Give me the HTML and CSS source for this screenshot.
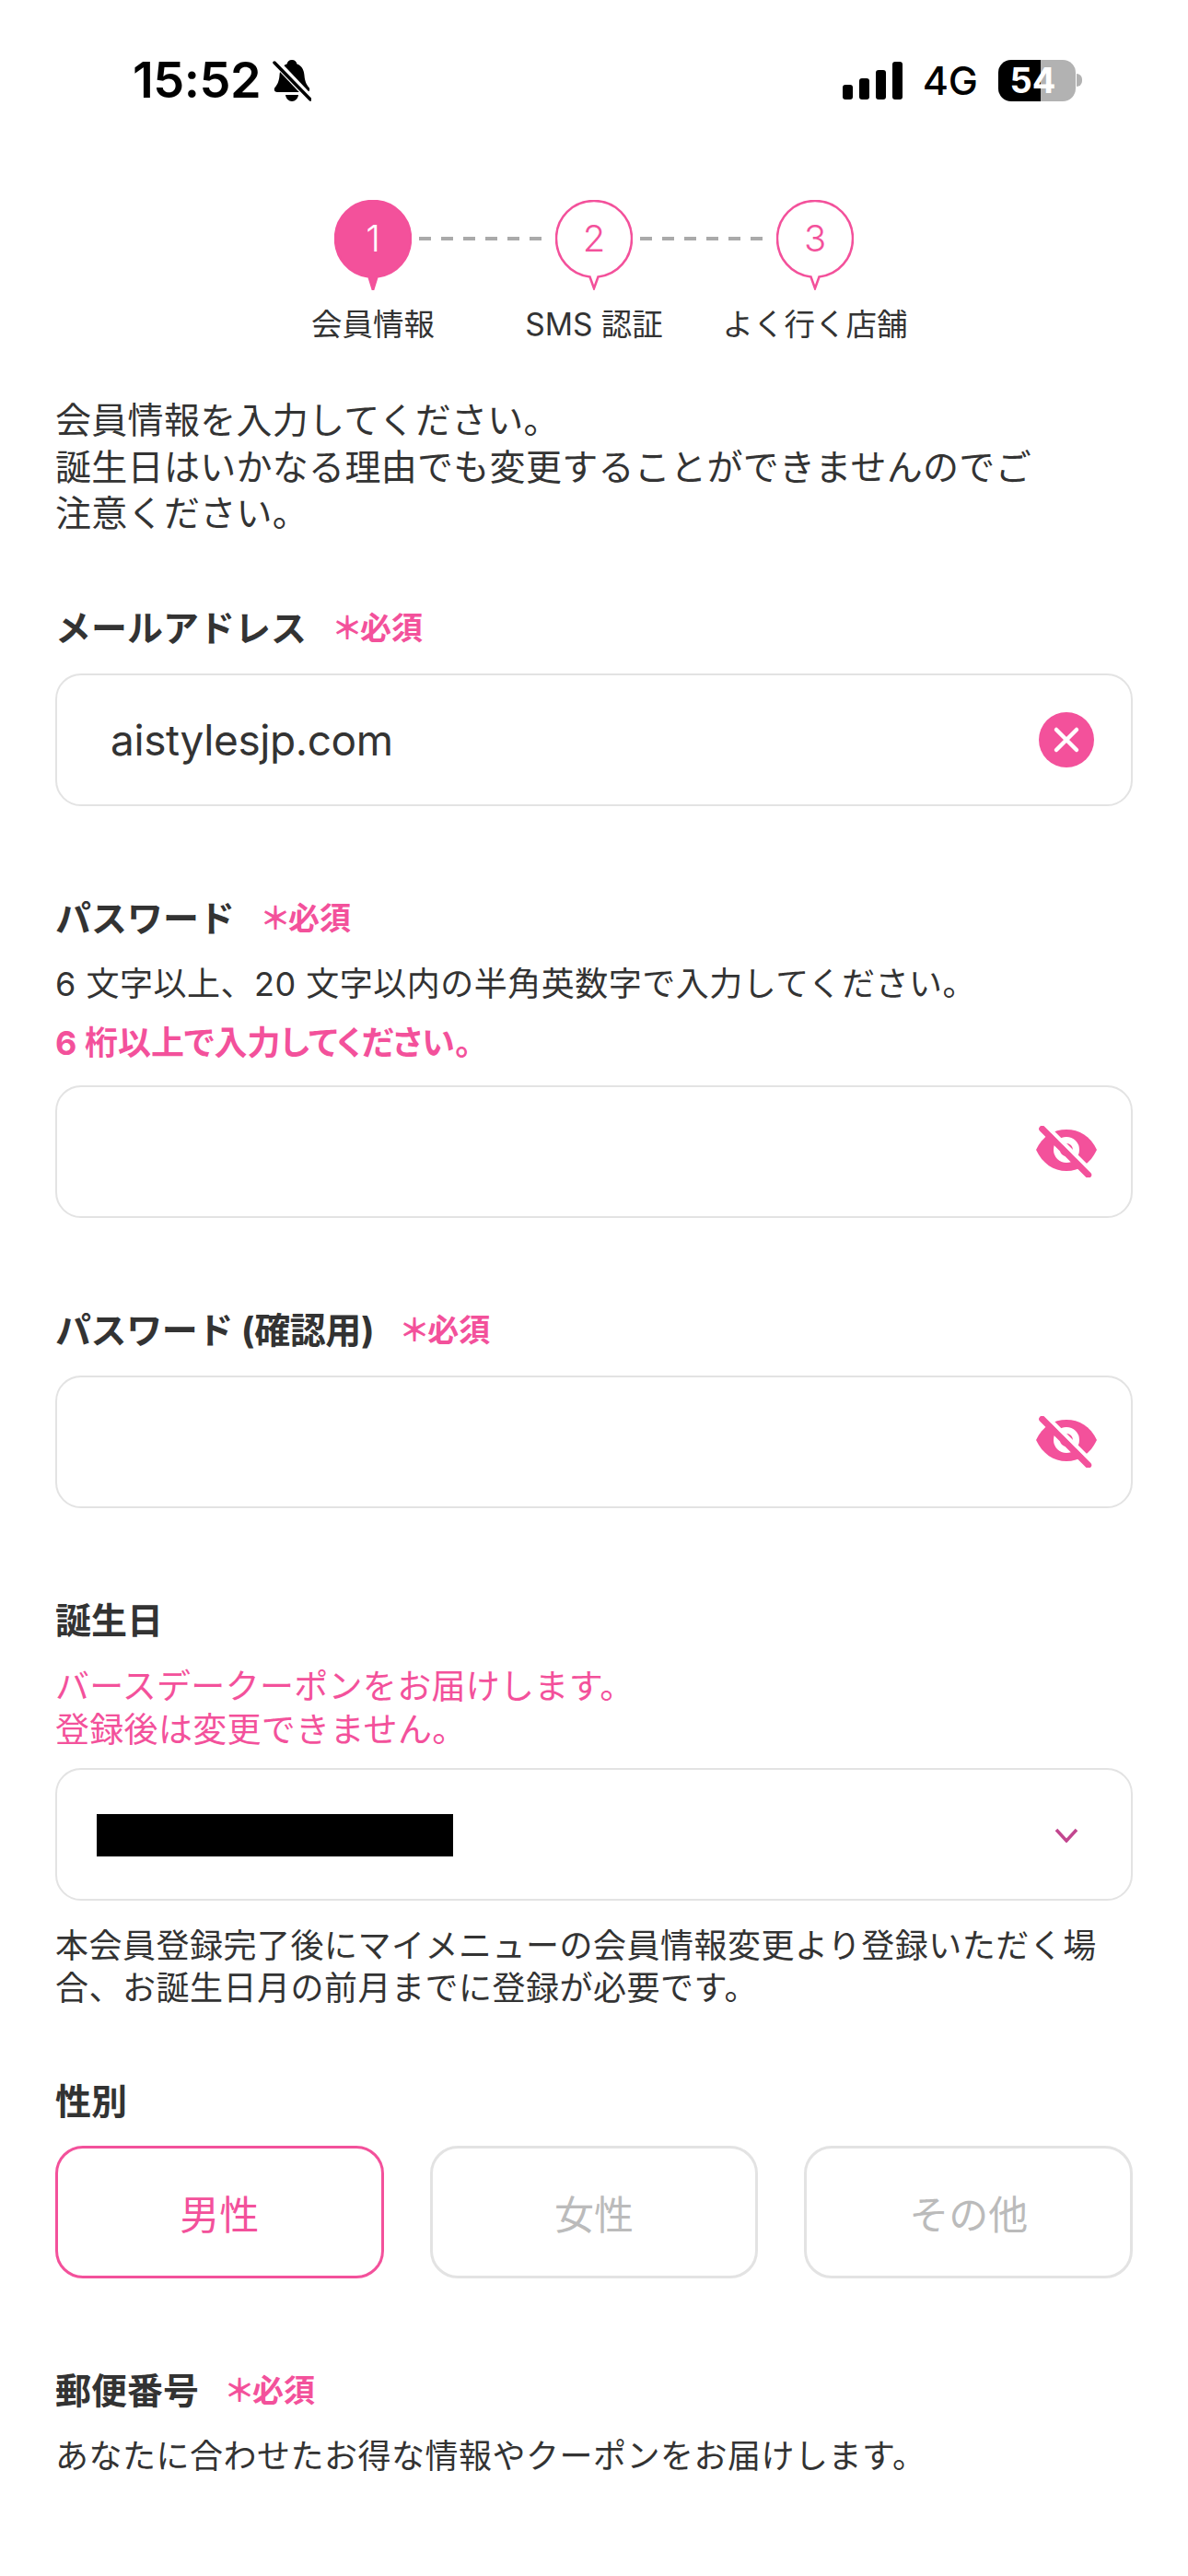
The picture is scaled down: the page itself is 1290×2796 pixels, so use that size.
FILE: index.html
```html
<!DOCTYPE html>
<html lang="ja">
<head>
  <meta charset="UTF-8" />
  <meta name="viewport" content="width=device-width, initial-scale=1.0"/>
  <title>会員情報</title>
  <link rel="stylesheet" href="styles.css">
</head>
<body>

  <!-- Status bar -->
  <div class="status-bar">
    <div class="status-left">
      <span class="clock">15:52</span>
      <svg class="bell" viewBox="0 0 42 45" width="42" height="45">
        <path d="M21 0c3 0 5 2 5.500 4.500C32 6.500 34 11 34.500 17c.5 6 2 9.500 5 13 1.500 2 .5 5-2.500 5H5c-3 0-4-3-2.500-5 3-3.500 4.500-7 5-13 .5-6 2.500-10.500 8-12.500C16 2 18 0 21 0z"/>
        <path d="M14 38h14c-.5 4-3.500 7-7 7s-6.500-3-7-7z"/>
        <path d="M3 2 L40 41" stroke="#fff" stroke-width="8"/>
        <path d="M2 3 L41 43" stroke="#000" stroke-width="3.500" stroke-linecap="round"/>
      </svg>
    </div>
    <div class="status-right">
      <div class="signal">
        <span class="bar bar1"></span>
        <span class="bar bar2"></span>
        <span class="bar bar3"></span>
        <span class="bar bar4"></span>
      </div>
      <span class="network">4G</span>
      <div class="battery">
        <span class="battery-level">54</span>
        <span class="battery-tip"></span>
      </div>
    </div>
  </div>

  <!-- Steps -->
  <div class="stepper">
    <div class="step step-active">
      <div class="pin-row">
        <div class="pin">
          <svg viewBox="0 0 84 98" width="84" height="98">
            <path class="pin-shape" d="M42 98 L37.500 83.500 C16 81 1 63 1 42 C1 19 19 1 42 1 C65 1 83 19 83 42 C83 63 68 81 46.500 83.500 Z"/>
          </svg>
          <span class="pin-num">1</span>
        </div>
        <span class="dashes"></span>
      </div>
      <span class="step-label">会員情報</span>
    </div>
    <div class="step">
      <div class="pin-row">
        <div class="pin">
          <svg viewBox="0 0 84 98" width="84" height="98">
            <path class="pin-shape" d="M42 96 L37.500 83.500 C16 81 1 63 1 42 C1 19 19 1 42 1 C65 1 83 19 83 42 C83 63 68 81 46.500 83.500 Z"/>
          </svg>
          <span class="pin-num">2</span>
        </div>
        <span class="dashes"></span>
      </div>
      <span class="step-label">SMS 認証</span>
    </div>
    <div class="step">
      <div class="pin-row">
        <div class="pin">
          <svg viewBox="0 0 84 98" width="84" height="98">
            <path class="pin-shape" d="M42 96 L37.500 83.500 C16 81 1 63 1 42 C1 19 19 1 42 1 C65 1 83 19 83 42 C83 63 68 81 46.500 83.500 Z"/>
          </svg>
          <span class="pin-num">3</span>
        </div>
      </div>
      <span class="step-label">よく行く店舗</span>
    </div>
  </div>

  <div class="form">
    <p class="intro">会員情報を入力してください。<br>誕生日はいかなる理由でも変更することができませんのでご<br>注意ください。</p>

    <div class="field field-email">
      <div class="label-row">
        <span class="label">メールアドレス</span>
        <span class="required">＊必須</span>
      </div>
      <div class="input">
        <span class="input-value">aistylesjp.com</span>
        <svg class="icon-clear" viewBox="0 0 60 60" width="60" height="60">
          <circle cx="30" cy="30" r="30" fill="#f3519b"/>
          <path d="M19 19 L41 41 M41 19 L19 41" stroke="#fff" stroke-width="4.500" stroke-linecap="round"/>
        </svg>
      </div>
    </div>

    <div class="field">
      <div class="label-row">
        <span class="label">パスワード</span>
        <span class="required">＊必須</span>
      </div>
      <p class="hint">6 文字以上、20 文字以内の半角英数字で入力してください。</p>
      <p class="error">6 桁以上で入力してください。</p>
      <div class="input input-after-error">
        <svg class="icon-eye" viewBox="0 0 66 56" width="66" height="56">
          <path fill="#f3519b" d="M0 26C7 11 19 4 33 4s26 7 33 22c-7 15-19 23-33 23S7 41 0 26z"/>
          <circle cx="33" cy="26" r="10.500" fill="none" stroke="#fff" stroke-width="7"/>
          <path d="M10.500 -.500 L60.500 49.500" stroke="#fff" stroke-width="4.500"/>
          <path d="M6.700 3.300 L56.700 53.300" stroke="#f3519b" stroke-width="7" stroke-linecap="round"/>
        </svg>
      </div>
    </div>

    <div class="field">
      <div class="label-row">
        <span class="label label-confirm">パスワード (確認用)</span>
        <span class="required">＊必須</span>
      </div>
      <div class="input">
        <svg class="icon-eye" viewBox="0 0 66 56" width="66" height="56">
          <path fill="#f3519b" d="M0 26C7 11 19 4 33 4s26 7 33 22c-7 15-19 23-33 23S7 41 0 26z"/>
          <circle cx="33" cy="26" r="10.500" fill="none" stroke="#fff" stroke-width="7"/>
          <path d="M10.500 -.500 L60.500 49.500" stroke="#fff" stroke-width="4.500"/>
          <path d="M6.700 3.300 L56.700 53.300" stroke="#f3519b" stroke-width="7" stroke-linecap="round"/>
        </svg>
      </div>
    </div>

    <div class="field">
      <div class="label-row">
        <span class="label">誕生日</span>
      </div>
      <p class="notice">バースデークーポンをお届けします。<br>登録後は変更できません。</p>
      <div class="input input-select">
        <span class="redacted"></span>
        <svg class="icon-chevron" viewBox="0 0 26 16" width="26" height="16">
          <path d="M2 2 L13 14 L24 2" fill="none" stroke="#c2468f" stroke-width="3.500"/>
        </svg>
      </div>
      <p class="note">本会員登録完了後にマイメニューの会員情報変更より登録いただく場合、お誕生日月の前月までに登録が必要です。</p>
    </div>

    <div class="field field-gender">
      <div class="label-row">
        <span class="label">性別</span>
      </div>
      <div class="gender-options">
        <div class="gender-btn selected">男性</div>
        <div class="gender-btn">女性</div>
        <div class="gender-btn">その他</div>
      </div>
    </div>

    <div class="field">
      <div class="label-row">
        <span class="label">郵便番号</span>
        <span class="required">＊必須</span>
      </div>
      <p class="hint">あなたに合わせたお得な情報やクーポンをお届けします。</p>
    </div>
  </div>

</body>
</html>
```

FILE: styles.css
```css
:root {
  --pink: #f3519b;
  --text: #333333;
  --line: #e3e3e3;
}

html, body {
  margin: 0;
  padding: 0;
  background: #ffffff;
}

body {
  height: 2796px;
  overflow: hidden;
  color: var(--text);
  font-family: Inter, "Noto Sans CJK JP", sans-serif;
}

p {
  margin: 0;
}

/* status bar */

.status-bar {
  height: 174px;
  display: flex;
  justify-content: space-between;
  align-items: center;
  padding: 0 122px 0 144px;
  color: #000000;
}

.status-left,
.status-right {
  display: flex;
  align-items: center;
}

.clock {
  font-size: 54px;
  font-weight: 600;
  line-height: 54px;
  letter-spacing: -0.5px;
}

.bell {
  margin-left: 13px;
}

.signal {
  display: flex;
  align-items: flex-end;
  gap: 7px;
  height: 41px;
}

.bar {
  width: 11px;
  border-radius: 3px;
  background: #000000;
}

.bar1 { height: 16px; }
.bar2 { height: 23px; }
.bar3 { height: 32px; }
.bar4 { height: 41px; }

.network {
  margin-left: 22px;
  font-size: 43px;
  font-weight: 500;
  line-height: 44px;
}

.battery {
  position: relative;
  width: 84px;
  height: 45px;
  margin-left: 22px;
  border-radius: 14px;
  background: linear-gradient(to right, #000000 46px, #b2b2b2 46px);
}

.battery-level {
  display: block;
  padding-right: 9px;
  text-align: center;
  color: #ffffff;
  font-size: 38px;
  font-weight: 700;
  line-height: 45px;
}

.battery-tip {
  position: absolute;
  top: 15px;
  right: -7px;
  width: 6px;
  height: 14px;
  border-radius: 0 7px 7px 0;
  background: #b2b2b2;
}

/* steps */

.stepper {
  display: flex;
  justify-content: flex-start;
  margin: 43px 0 0 285px;
}

.step {
  width: 240px;
  display: flex;
  flex-direction: column;
  align-items: center;
}

.pin-row {
  position: relative;
  width: 84px;
  height: 98px;
}

.pin {
  position: relative;
  width: 84px;
  height: 98px;
}

.pin svg {
  display: block;
}

.pin-shape {
  fill: #ffffff;
  stroke: var(--pink);
  stroke-width: 2.500;
}

.step-active .pin-shape {
  fill: var(--pink);
}

.pin-num {
  position: absolute;
  top: 0;
  left: 0;
  width: 84px;
  height: 84px;
  text-align: center;
  color: var(--pink);
  font-size: 40px;
  font-weight: 300;
  line-height: 84px;
}

.step-active .pin-num {
  color: #ffffff;
}

.dashes {
  position: absolute;
  top: 40px;
  left: 92px;
  width: 134px;
  height: 4px;
  background: repeating-linear-gradient(to right, #aaaaaa 0, #aaaaaa 13px, transparent 13px, transparent 24px);
}

.step-label {
  margin-top: 17px;
  white-space: nowrap;
  font-size: 33.500px;
  line-height: 40px;
}

/* form */

.form {
  padding: 0 60px;
}

.intro {
  margin-top: 59px;
  font-size: 39px;
  letter-spacing: 0.3px;
  line-height: 50.500px;
}

.field {
  margin-top: 95px;
}

.field-email {
  margin-top: 72px;
}

.field-gender {
  margin-top: 73px;
}

.label-row {
  box-sizing: border-box;
  display: flex;
  align-items: center;
  gap: 30px;
  height: 50px;
  padding-top: 3px;
}

.label {
  font-size: 39px;
  font-weight: 700;
  line-height: 47px;
}

.label-confirm {
  letter-spacing: -0.4px;
}

.required {
  color: var(--pink);
  font-size: 34px;
  font-weight: 700;
  line-height: 47px;
  font-feature-settings: 'palt' 1;
}

.hint {
  margin-top: 25px;
  font-size: 36px;
  letter-spacing: 0.5px;
  line-height: 46px;
}

.error {
  margin-top: 18px;
  color: var(--pink);
  font-size: 36px;
  font-weight: 700;
  line-height: 46px;
  font-feature-settings: 'palt' 1;
}

.input {
  box-sizing: border-box;
  height: 144px;
  margin-top: 26px;
  display: flex;
  align-items: center;
  justify-content: flex-end;
  padding: 0 40px 0 58px;
  border: 2px solid var(--line);
  border-radius: 28px;
  background: #ffffff;
}

.input-after-error {
  margin-top: 23px;
}

.input-value {
  margin-right: auto;
  font-size: 46px;
  letter-spacing: -0.4px;
  line-height: 56px;
}

.icon-eye {
  margin-right: -3px;
}

.notice {
  margin-top: 25px;
  color: var(--pink);
  font-size: 37px;
  letter-spacing: 0.3px;
  line-height: 47px;
}

.input-select {
  margin-top: 18px;
  padding: 3px 57px 0 43px;
}

.redacted {
  width: 387px;
  height: 46px;
  margin-right: auto;
  background: #000000;
}

.note {
  margin-top: 26px;
  font-size: 36px;
  letter-spacing: 0.5px;
  line-height: 46px;
}

.gender-options {
  display: grid;
  grid-template-columns: repeat(3, 1fr);
  gap: 50px;
  margin-top: 25px;
}

.gender-btn {
  box-sizing: border-box;
  height: 144px;
  display: flex;
  align-items: center;
  justify-content: center;
  border: 3px solid var(--line);
  border-radius: 30px;
  color: #bbbbbb;
  font-size: 43px;
}

.gender-btn.selected {
  border-color: var(--pink);
  color: var(--pink);
}
```
